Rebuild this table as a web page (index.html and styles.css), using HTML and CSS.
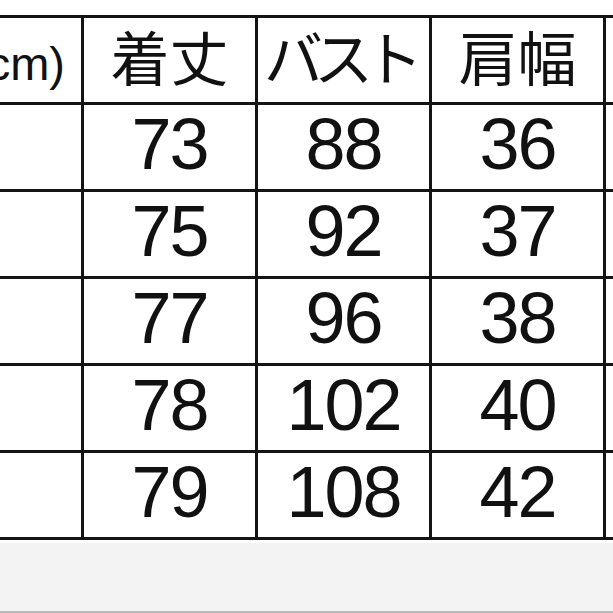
FILE: index.html
```html
<!DOCTYPE html>
<html lang="ja">
<head>
<meta charset="utf-8">
<link rel="stylesheet" href="styles.css">
</head>
<body>
<div class="sheet">
  <table class="size-table">
    <tr class="head">
      <td class="label">(cm)</td>
      <td>着丈</td>
      <td class="kana">バスト</td>
      <td>肩幅</td>
      <td>袖丈</td>
    </tr>
    <tr><td class="label"></td><td>73</td><td>88</td><td>36</td><td></td></tr>
    <tr><td class="label"></td><td>75</td><td>92</td><td>37</td><td></td></tr>
    <tr><td class="label"></td><td>77</td><td>96</td><td>38</td><td></td></tr>
    <tr><td class="label"></td><td>78</td><td>102</td><td>40</td><td></td></tr>
    <tr><td class="label"></td><td>79</td><td>108</td><td>42</td><td></td></tr>
  </table>
</div>
<div class="footer-bar"></div>
</body>
</html>
```
FILE: styles.css
```css
html, body {
  margin: 0;
  padding: 0;
  background: #ffffff;
  width: 613px;
  height: 613px;
  overflow: hidden;
}

.sheet {
  height: 543px;
  box-sizing: border-box;
  padding-top: 15px;
  overflow: hidden;
  background: #ffffff;
}

.size-table {
  border-collapse: collapse;
  table-layout: fixed;
  width: 873px;
  margin-left: -93px;
  color: #111111;
}

.size-table td {
  width: 171px;
  height: 78px;
  padding: 0 0 6px 0;
  box-sizing: content-box;
  border: 3px solid #141414;
  text-align: center;
  vertical-align: middle;
  white-space: nowrap;
  overflow: hidden;
  font-family: "Liberation Sans", Arial, sans-serif;
  font-size: 72px;
  line-height: 1;
  letter-spacing: -2px;
}

.size-table .head td {
  font-family: "Noto Sans CJK JP", "Liberation Sans", sans-serif;
  font-size: 59px;
  letter-spacing: 0;
  height: 74px;
  padding-bottom: 10px;
}

.size-table .head td.kana {
  letter-spacing: -9px;
  text-indent: -9px;
}

.size-table .head td.label {
  font-family: "Liberation Sans", Arial, sans-serif;
  font-size: 47px;
  text-align: right;
  padding-right: 16px;
  width: 155px;
  height: 78px;
  padding-top: 6px;
  padding-bottom: 0;
}

.footer-bar {
  height: 68px;
  background: #f3f3f3;
  border-bottom: 2px solid #b9b9b9;
}
```
